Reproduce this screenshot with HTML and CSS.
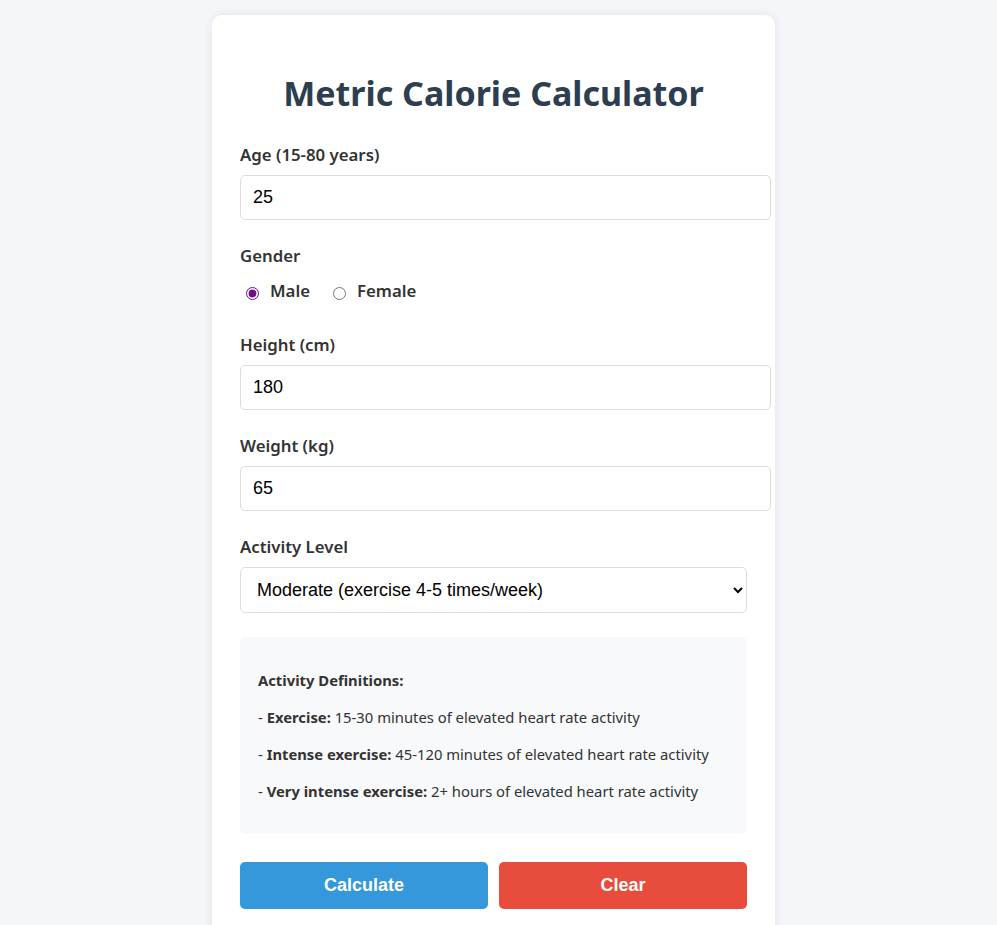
FILE: index.html
```html
<!DOCTYPE html>
<html>
<head>
<meta charset="utf-8">
<title>Metric Calorie Calculator</title>
<link rel="stylesheet" href="styles.css">
</head>
<body>
<div class="card">
  <h1 class="title">Metric Calorie Calculator</h1>
  <div class="group">
    <label class="label" for="age">Age (15-80 years)</label>
    <input class="field" id="age" type="number" value="25">
  </div>
  <div class="group">
    <label class="label">Gender</label>
    <div class="radios">
      <label class="radio"><input type="radio" name="g" checked><span>Male</span></label>
      <label class="radio"><input type="radio" name="g"><span>Female</span></label>
    </div>
  </div>
  <div class="group">
    <label class="label" for="h">Height (cm)</label>
    <input class="field" id="h" type="number" value="180">
  </div>
  <div class="group">
    <label class="label" for="w">Weight (kg)</label>
    <input class="field" id="w" type="number" value="65">
  </div>
  <div class="group">
    <label class="label" for="a">Activity Level</label>
    <select class="select" id="a">
      <option>Moderate (exercise 4-5 times/week)</option>
    </select>
  </div>
  <div class="info">
    <p><strong>Activity Definitions:</strong></p>
    <p>- <strong>Exercise:</strong> 15-30 minutes of elevated heart rate activity</p>
    <p>- <strong>Intense exercise:</strong> 45-120 minutes of elevated heart rate activity</p>
    <p>- <strong>Very intense exercise:</strong> 2+ hours of elevated heart rate activity</p>
  </div>
  <div class="buttons">
    <button class="btn btn-calc">Calculate</button>
    <button class="btn btn-clear">Clear</button>
  </div>
</div>
</body>
</html>
```
FILE: styles.css
```css
html, body {
  margin: 0;
  padding: 0;
}
body {
  background: #f5f6fa;
  font-family: "Noto Sans", "Open Sans", sans-serif;
  color: #333;
  padding-right: 10px;
}
.card {
  width: 507px;
  margin: 15px auto 0;
  background: #fff;
  border-radius: 10px;
  padding: 28px 28px 40px;
  box-shadow: 0 0 10px rgba(0, 0, 0, 0.08);
}
.title {
  margin: 28px 0 28px;
  text-align: center;
  font-size: 34px;
  font-weight: 700;
  color: #2c3e50;
  line-height: 44px;
}
.group {
  margin-bottom: 24px;
}
.label {
  display: block;
  font-size: 16.8px;
  font-weight: 600;
  line-height: 24px;
  margin-bottom: 8px;
  color: #333;
}
.field {
  display: block;
  box-sizing: border-box;
  width: 531px;
  height: 45px;
  padding: 0 12px;
  border: 1px solid #ddd;
  border-radius: 5px;
  font-family: "Liberation Sans", Arial, sans-serif;
  font-size: 18px;
  color: #000;
  background: #fff;
  margin: 0;
}
.field::-webkit-inner-spin-button,
.field::-webkit-outer-spin-button {
  -webkit-appearance: none;
  margin: 0;
}
.radios {
  display: flex;
  align-items: center;
  height: 38px;
  margin-top: -5px;
}
.radio {
  display: flex;
  align-items: center;
  font-size: 16.8px;
  font-weight: 600;
  margin-right: 17px;
}
.radio input {
  accent-color: #6f0f8c;
  margin: 6px 11px 0 6px;
  width: 13px;
  height: 13px;
}
.select {
  display: block;
  width: 507px;
  height: 46px;
  padding: 0 12px;
  border: 1px solid #ddd;
  border-radius: 5px;
  font-family: "Liberation Sans", Arial, sans-serif;
  font-size: 18px;
  color: #000;
  background: #fff;
  margin: 0;
}
.info {
  margin-top: 21px;
  background: #f8f9fa;
  border-radius: 5px;
  padding: 17px 18px;
  font-size: 14.8px;
  color: #333;
}
.info p {
  margin: 15px 0;
  line-height: 22px;
}
.buttons {
  display: flex;
  gap: 11px;
  margin-top: 28px;
}
.btn {
  flex: 1;
  height: 47px;
  border: none;
  border-radius: 5px;
  color: #fff;
  font-family: "Liberation Sans", Arial, sans-serif;
  font-size: 18px;
  font-weight: 700;
  cursor: pointer;
}
.btn-calc {
  background: #3498db;
}
.btn-clear {
  background: #e74c3c;
}
```
